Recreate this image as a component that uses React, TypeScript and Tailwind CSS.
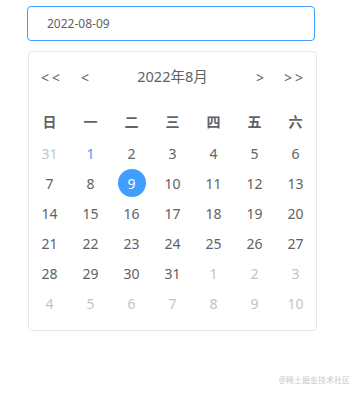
import React from "react";

type Cell = { d: number; kind: "prev" | "cur" | "next" };

function buildCells(): Cell[] {
  const cells: Cell[] = [{ d: 31, kind: "prev" }];
  for (let i = 1; i <= 31; i++) cells.push({ d: i, kind: "cur" });
  for (let i = 1; i <= 10; i++) cells.push({ d: i, kind: "next" });
  return cells;
}

export default function App() {
  const cells = buildCells();
  const weeks = ["日", "一", "二", "三", "四", "五", "六"];
  const font = { fontFamily: '"Noto Sans", "Noto Sans CJK SC", sans-serif' };
  return (
    <div className="relative w-[360px] h-[395px] bg-white" style={font}>
      <div className="pl-[27px] pt-[6px]">
        <div className="w-[288px] h-[35px] border border-[#409eff] rounded-[4px] flex items-center pl-[19px] text-[12px] text-[#606266]">
          2022-08-09
        </div>
        <div className="ml-[1px] mt-[10px] w-[289px] h-[280px] border border-[#e4e7ed] rounded-[4px] bg-white">
          <div className="mt-[13px] h-[24px] flex items-center text-[14.5px] text-[#606266]">
            <span className="ml-[12px] tracking-[3px] text-[14px]">&lt;&lt;</span>
            <span className="ml-[18px] text-[14px]">&lt;</span>
            <span className="flex-1 text-center">2022年8月</span>
            <span className="text-[14px]">&gt;</span>
            <span className="ml-[20px] mr-[10px] tracking-[3px] text-[14px]">&gt;&gt;</span>
          </div>
          <div className="mt-[17px] grid grid-cols-[repeat(7,41px)] h-[30px] items-center">
            {weeks.map((w) => (
              <div key={w} className="text-center text-[14px] font-bold text-[#606266]">
                {w}
              </div>
            ))}
          </div>
          <div className="mt-[2px] grid grid-cols-[repeat(7,41px)] auto-rows-[30px]">
            {cells.map((c, i) => {
              const selected = c.kind === "cur" && c.d === 9;
              const color =
                c.kind === "cur"
                  ? c.d === 1
                    ? "text-[#409eff]"
                    : "text-[#606266]"
                  : "text-[#c0c4cc]";
              return (
                <div key={i} className="flex items-center justify-center">
                  {selected ? (
                    <span className="w-[28px] h-[28px] rounded-full bg-[#409eff] text-white text-[14px] flex items-center justify-center">
                      {c.d}
                    </span>
                  ) : (
                    <span className={`text-[14px] ${color}`}>{c.d}</span>
                  )}
                </div>
              );
            })}
          </div>
        </div>
      </div>
      <div className="absolute right-[10px] top-[374px] text-[8px] text-[#c8c8c8]">@稀土掘金技术社区</div>
    </div>
  );
}
